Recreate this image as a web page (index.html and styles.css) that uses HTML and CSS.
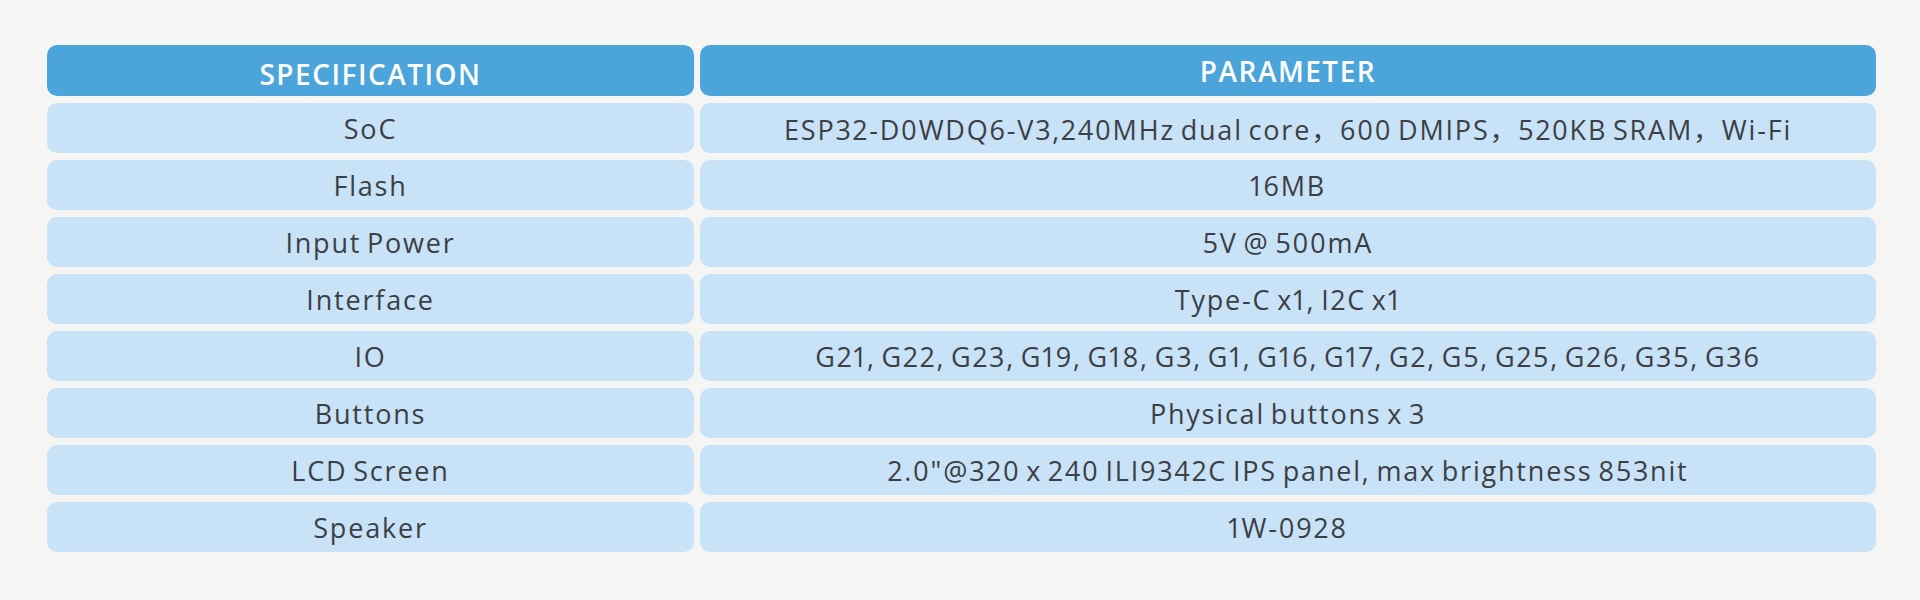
FILE: index.html
```html
<!DOCTYPE html>
<html lang="en">
<head>
<meta charset="utf-8">
<title>Specifications</title>
<link rel="stylesheet" href="styles.css">
</head>
<body>
<div class="page">
  <div class="spec-table">
    <div class="cell head head-left">SPECIFICATION</div>
    <div class="cell head">PARAMETER</div>

    <div class="cell">SoC</div>
    <div class="cell">ESP32-D0WDQ6-V3,240MHz dual core，600 DMIPS，520KB SRAM，Wi-Fi</div>

    <div class="cell">Flash</div>
    <div class="cell">16MB</div>

    <div class="cell">Input Power</div>
    <div class="cell">5V @ 500mA</div>

    <div class="cell">Interface</div>
    <div class="cell">Type-C x1, I2C x1</div>

    <div class="cell">IO</div>
    <div class="cell">G21, G22, G23, G19, G18, G3, G1, G16, G17, G2, G5, G25, G26, G35, G36</div>

    <div class="cell">Buttons</div>
    <div class="cell">Physical buttons x 3</div>

    <div class="cell">LCD Screen</div>
    <div class="cell">2.0"@320 x 240 ILI9342C IPS panel, max brightness 853nit</div>

    <div class="cell">Speaker</div>
    <div class="cell">1W-0928</div>
  </div>
</div>
</body>
</html>
```

FILE: styles.css
```css
html, body {
  margin: 0;
  padding: 0;
}

body {
  background: #f5f5f4;
  width: 1920px;
  height: 600px;
  overflow: hidden;
  font-family: "Open Sans", "Noto Sans CJK SC", sans-serif;
}

.page {
  padding: 45px 0 0 47px;
}

.spec-table {
  display: grid;
  width: 1829px;
  grid-template-columns: 647px 1176px;
  grid-template-rows: 51px repeat(8, 50px);
  column-gap: 6px;
  row-gap: 7px;
}

.cell {
  display: flex;
  align-items: center;
  justify-content: center;
  background: #c8e2f8;
  border-radius: 10px;
  color: #3c3f44;
  font-size: 27px;
  font-weight: 400;
  letter-spacing: 1.8px;
  word-spacing: -3px;
  font-variant-numeric: proportional-nums;
  white-space: nowrap;
}

.head {
  background: #4ba4da;
  color: #ffffff;
  font-size: 28px;
  font-weight: 600;
  letter-spacing: 1.5px;
  word-spacing: 0;
}

.head-left {
  padding-top: 7px;
  box-sizing: border-box;
}
```
